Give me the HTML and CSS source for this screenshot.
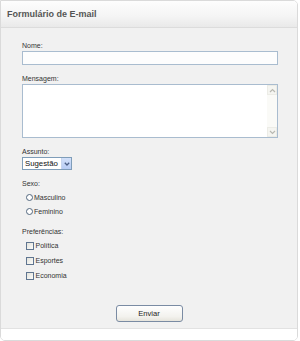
FILE: index.html
```html
<!DOCTYPE html>
<html lang="pt-BR">
<head>
  <meta charset="UTF-8">
  <title>Formulário de E-mail</title>
  <link rel="stylesheet" href="styles.css">
</head>
<body>

  <div class="panel">
    <div class="panel-head">Formulário de E-mail</div>

    <form class="panel-body">
      <div class="field first">
        <label class="lbl" for="nome">Nome:</label>
        <input class="text-input" id="nome" type="text">
      </div>

      <div class="field">
        <label class="lbl" for="msg">Mensagem:</label>
        <div class="textarea-box">
          <textarea id="msg"></textarea>
          <div class="scrollbar">
            <span class="sb-btn">
              <svg width="7" height="5" viewBox="0 0 7 5"><path d="M1 4 L3.5 1.5 L6 4" fill="none" stroke="#b9b9b2" stroke-width="1.2"/></svg>
            </span>
            <span class="sb-btn">
              <svg width="7" height="5" viewBox="0 0 7 5"><path d="M1 1 L3.5 3.5 L6 1" fill="none" stroke="#b9b9b2" stroke-width="1.2"/></svg>
            </span>
          </div>
        </div>
      </div>

      <div class="field">
        <label class="lbl" for="assunto">Assunto:</label>
        <div class="select-box">
          <select id="assunto">
            <option>Sugestão</option>
            <option>Dúvida</option>
            <option>Reclamação</option>
          </select>
          <span class="select-arrow">
            <svg width="6" height="4" viewBox="0 0 6 4"><path d="M0.8 0.8 L3 3 L5.2 0.8" fill="none" stroke="#4b5f86" stroke-width="1.3"/></svg>
          </span>
        </div>
      </div>

      <div class="field">
        <span class="lbl">Sexo:</span>
        <div class="opts">
          <label class="opt radio-row"><input type="radio" name="sexo"> Masculino</label>
          <label class="opt radio-row"><input type="radio" name="sexo"> Feminino</label>
        </div>
      </div>

      <div class="field">
        <span class="lbl">Preferências:</span>
        <div class="opts">
          <label class="opt check-row"><input type="checkbox"> Política</label>
          <label class="opt check-row"><input type="checkbox"> Esportes</label>
          <label class="opt check-row"><input type="checkbox"> Economia</label>
        </div>
      </div>

      <div class="actions">
        <button type="button" class="btn">Enviar</button>
      </div>
    </form>

    <div class="panel-foot"></div>
  </div>

</body>
</html>
```

FILE: styles.css
```css
body {
  margin: 0;
  background: #fff;
  font-family: 'Liberation Sans', Arial, sans-serif;
  color: #333;
}
.panel {
  width: 296px;
  height: 339px;
  border: 1px solid #dadada;
  border-radius: 0 5px 5px 5px;
  overflow: hidden;
  display: flex;
  flex-direction: column;
}
.panel-head {
  height: 26px;
  line-height: 27px;
  padding-left: 6px;
  font-size: 9px;
  font-weight: bold;
  color: #555;
  background: linear-gradient(#fdfdfd, #f4f4f4 60%, #e9e9e9);
  border-bottom: 1px solid #dcdcdc;
}
.panel-body {
  flex: 1;
  margin: 0;
  padding: 13px 18px 0 21px;
  background: #f1f1f1;
  border-bottom: 1px solid #e2e2e2;
}
.panel-foot {
  height: 11px;
  background: #fff;
}
.field {
  margin-top: 9px;
}
.field.first {
  margin-top: 0;
}
.lbl {
  display: block;
  height: 9px;
  line-height: 9px;
  font-size: 7px;
  color: #333;
  margin-bottom: 1px;
}
.text-input {
  display: block;
  box-sizing: border-box;
  width: 256px;
  height: 14px;
  margin: 0;
  padding: 0 2px;
  border: 1px solid #a9bccf;
  background: #fdfdfd;
  font-size: 8px;
  outline: none;
}
.textarea-box {
  box-sizing: border-box;
  width: 256px;
  height: 54px;
  border: 1px solid #a9bccf;
  background: #fff;
  display: flex;
}
.textarea-box textarea {
  flex: 1;
  border: 0;
  margin: 0;
  padding: 2px;
  resize: none;
  outline: none;
  background: #fff;
  font-size: 8px;
}
.scrollbar {
  width: 10px;
  background: #fafaf7;
  display: flex;
  flex-direction: column;
  justify-content: space-between;
}
.sb-btn {
  height: 10px;
  display: flex;
  align-items: center;
  justify-content: center;
  background: #f5f5f1;
  border: 1px solid #ececE6;
  box-sizing: border-box;
}
.select-box {
  box-sizing: border-box;
  width: 50px;
  height: 13px;
  margin-top: 1px;
  border: 1px solid #7f9db9;
  background: #fff;
  display: flex;
}
.select-box select {
  flex: 1;
  min-width: 0;
  -webkit-appearance: none;
  appearance: none;
  border: 0;
  margin: 0;
  padding: 0 0 0 2px;
  height: 11px;
  line-height: 11px;
  background: #fff;
  font-family: 'Liberation Sans', Arial, sans-serif;
  font-size: 7.8px;
  color: #111;
  outline: none;
}
.select-arrow {
  width: 9px;
  display: flex;
  align-items: center;
  justify-content: center;
  background: linear-gradient(#d3e1fa, #b7ccf4);
  border-left: 1px solid #c8d6ef;
}
.opts {
  padding-top: 1px;
}
.opt {
  display: flex;
  align-items: center;
  padding-left: 4px;
  font-size: 7px;
  color: #333;
}
.radio-row {
  height: 14px;
}
.check-row {
  height: 15px;
}
.opt input {
  -webkit-appearance: none;
  appearance: none;
  margin: 0 1px 0 0;
  box-sizing: border-box;
  background: #fff;
}
.radio-row input {
  width: 7px;
  height: 7px;
  border: 1px solid #52677f;
  border-radius: 50%;
}
.check-row input {
  width: 8px;
  height: 8px;
  border: 1px solid #5f7590;
  background: linear-gradient(135deg, #e3e3dc, #fbfbf9);
  margin-right: 1.5px;
}
.actions {
  text-align: center;
  padding-top: 19px;
  padding-right: 3px;
}
.btn {
  width: 67px;
  height: 17px;
  padding: 0;
  border: 1px solid #7a8ba3;
  border-radius: 3px;
  background: linear-gradient(#fefefe, #f3f2ee 70%, #e6e4dc);
  font-family: 'Liberation Sans', Arial, sans-serif;
  font-size: 7.6px;
  color: #222;
}
```
